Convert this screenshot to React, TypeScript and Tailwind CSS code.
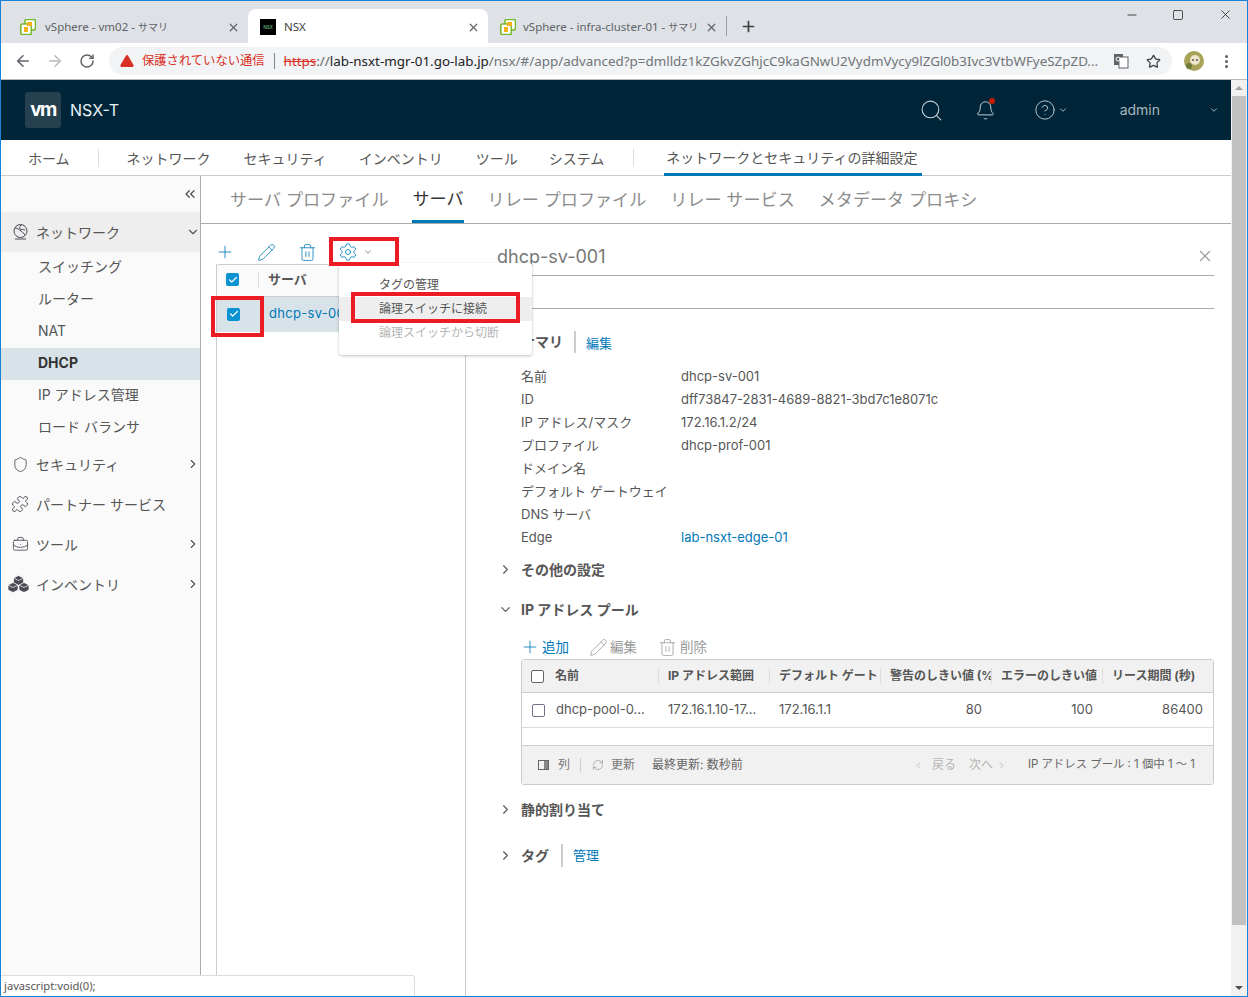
import React from "react";
import {
  ArrowLeft, ArrowRight, RotateCw, Star, MoreVertical, X, Plus, Minus, Square, Search, Bell, CircleHelp,
  ChevronDown, ChevronRight, ChevronLeft, ChevronsLeft, Pencil, Trash2, Settings, Shield, Puzzle, BriefcaseBusiness, Check, RefreshCw, TriangleAlert,
} from "lucide-react";

function VsIcon() {
  return (
    <svg width="16" height="16" viewBox="0 0 16 16" className="shrink-0">
      <rect x="5" y="0.5" width="10.5" height="10.5" rx="1.5" fill="#fff" stroke="#76b82a" strokeWidth="1.6" />
      <rect x="0.8" y="5" width="10.5" height="10.5" rx="1.5" fill="#fff" stroke="#76b82a" strokeWidth="1.6" />
      <rect x="7" y="3" width="5" height="4" fill="#f5b21a" />
      <rect x="4" y="8" width="4" height="5" fill="#f5b21a" />
    </svg>
  );
}

function BrowserTab({ title, suffix, icon, active, width, gap }: { title: string; suffix?: string; icon: React.ReactNode; active?: boolean; width: string; gap: string }) {
  return (
    <div className={`${width} h-[34px] flex items-center pl-3 pr-2 pt-[2px] rounded-t-lg ${active ? "bg-white text-[#3c4043]" : "text-[#5f6368]"}`}>
      {icon}
      <span className={`${gap} flex-1 whitespace-nowrap text-[11.5px]`}>
        {title}
        {suffix && <span className="text-[10px]">{suffix}</span>}
      </span>
      <X size={13} strokeWidth={2.2} className="text-[#5f6368] shrink-0" />
    </div>
  );
}

function Chrome() {
  return (
    <div className="h-[79px] shrink-0 font-[family-name:'Noto_Sans','Noto_Sans_CJK_JP',sans-serif] border-b border-[#b8babd]">
      <div className="h-[42px] bg-[#dee1e6] relative flex items-end pl-[7px]">
        <BrowserTab title="vSphere - vm02 - " suffix="サマリ" icon={<VsIcon />} width="w-[240px]" gap="ml-[9px]" />
        <BrowserTab
          title="NSX"
          width="w-[240px]"
          gap="ml-[8px]"
          active
          icon={<span className="w-4 h-4 bg-black text-[5px] leading-4 text-center text-[#7fd19a] shrink-0">NSX</span>}
        />
        <BrowserTab title="vSphere - infra-cluster-01 - " suffix="サマリ" icon={<VsIcon />} width="w-[238px]" gap="ml-[7px]" />
        <div className="w-px h-5 bg-[#9aa0a6] mb-[7px]" />
        <Plus size={17} strokeWidth={2.4} className="ml-[13px] mb-[8px] text-[#3c4043]" />
        <div className="absolute right-[14px] top-[6px] flex items-center text-[#111]">
          <Minus size={14} strokeWidth={1.3} />
          <Square size={12} strokeWidth={1.4} className="ml-[33px]" />
          <X size={15} strokeWidth={1.2} className="ml-[34px]" />
        </div>
      </div>
      <div className="h-[36px] bg-white flex items-center pl-[13px]">
        <ArrowLeft size={18} strokeWidth={2} className="text-[#5f6368] shrink-0" />
        <ArrowRight size={18} strokeWidth={2} className="ml-[14px] text-[#b6b9bc] shrink-0" />
        <RotateCw size={16} strokeWidth={2.2} className="ml-[15px] text-[#5f6368] shrink-0" />
        <div className="ml-[14px] h-[28px] w-[1063px] shrink-0 rounded-full bg-[#f1f3f4] flex items-center pl-[10px] pr-[11px] text-[13.4px] whitespace-nowrap">
          <TriangleAlert size={16} strokeWidth={0} fill="#d93025" className="shrink-0" />
          <span className="ml-[7px] text-[12.3px] text-[#d93025]">保護されていない通信</span>
          <span className="mx-[9px] w-px h-[16px] bg-[#80868b]" />
          <span className="text-[#d93025] line-through">https</span>
          <span className="text-[#5f6368]">://</span>
          <span className="text-[#202124]">lab-nsxt-mgr-01.go-lab.jp</span>
          <span className="text-[#70757a] flex-1 min-w-0">/nsx/#/app/advanced?p=dmlldz1kZGkvZGhjcC9kaGNwU2VydmVycy9lZGl0b3Ivc3VtbWFyeSZpZD...</span>
          <svg width="16" height="16" viewBox="0 0 16 16" className="ml-[10px] shrink-0">
            <rect x="1" y="1" width="9" height="11" fill="#5f6368" />
            <rect x="6" y="4" width="9" height="11" fill="#fff" stroke="#5f6368" />
            <circle cx="5" cy="6" r="2" fill="none" stroke="#fff" />
          </svg>
          <Star size={15} strokeWidth={2} className="ml-[17px] text-[#3c4043] shrink-0" />
        </div>
        <svg width="20" height="20" viewBox="0 0 20 20" className="ml-[12px] shrink-0">
          <circle cx="10" cy="10" r="10" fill="#a9a35a" />
          <circle cx="11" cy="9" r="5" fill="#ece6cc" />
          <circle cx="9" cy="9" r="1" fill="#555" />
          <circle cx="13" cy="9" r="1" fill="#555" />
          <circle cx="5" cy="15" r="3" fill="#6d7a3a" />
        </svg>
        <MoreVertical size={17} strokeWidth={2.4} className="ml-[14px] text-[#5f6368] shrink-0" />
      </div>
    </div>
  );
}

function AppHeader() {
  return (
    <div className="h-[60px] shrink-0 bg-[#002538] flex items-center pl-[24px] text-[#fafafa]">
      <div className="w-[36px] h-[36px] rounded-[3px] bg-[#25404f] flex items-center justify-center text-[19px] font-bold tracking-[-1.5px] text-white">vm</div>
      <span className="ml-[9px] text-[16px] text-[#e8f3f8]">NSX-T</span>
      <div className="flex-1" />
      <Search size={25} strokeWidth={1} className="text-[#c8d3d8]" />
      <div className="ml-[31px] relative">
        <Bell size={21} strokeWidth={1.1} className="text-[#c8d3d8]" />
        <span className="absolute right-[1px] top-[-2px] w-[6px] h-[6px] rounded-full bg-[#c21d00]" />
      </div>
      <CircleHelp size={22} strokeWidth={1} className="ml-[38px] text-[#c8d3d8]" />
      <ChevronDown size={10} className="ml-[2px] text-[#c8d3d8]" />
      <span className="ml-[52px] mb-[1px] text-[14px] text-[#a9b7bf]">admin</span>
      <ChevronDown size={10} className="ml-[49px] mr-[12px] text-[#c8d3d8]" />
    </div>
  );
}

function NavBar() {
  const items: [string, string][] = [
    ["セキュリティ", "ml-[33px]"],
    ["インベントリ", "ml-[32px]"],
    ["ツール", "ml-[33px]"],
    ["システム", "ml-[31px]"],
  ];
  return (
    <div className="h-[36px] shrink-0 bg-white border-b border-[#ccc] flex items-stretch pl-[27px] text-[14px] text-[#565656]">
      <span className="self-center mt-[1px]">ホーム</span>
      <span className="self-center w-px h-[18px] bg-[#ddd] ml-[28px]" />
      <span className="self-center mt-[1px] ml-[28px]">ネットワーク</span>
      {items.map(([t, m]) => (
        <span key={t} className={`self-center mt-[1px] ${m}`}>{t}</span>
      ))}
      <span className="self-center w-px h-[18px] bg-[#ddd] ml-[29px]" />
      <span className="ml-[30px] pl-[2px] pr-[4px] flex items-center border-b-[3px] border-[#0079b8] pt-[2px] h-[36px]">ネットワークとセキュリティの詳細設定</span>
    </div>
  );
}

function Sub({ t, active }: { t: string; active?: boolean }) {
  return (
    <div className={`h-[32px] pl-[37px] pb-[4px] flex items-center text-[14px] ${active ? "bg-[#d8e3e9] font-bold text-[#333]" : "text-[#565656]"}`}>{t}</div>
  );
}

function Group({ icon, t, open }: { icon: React.ReactNode; t: string; open?: boolean | null }) {
  return (
    <div className={`h-[40px] flex items-center pl-[10px] text-[14px] text-[#565656] ${open ? "bg-[#eee]" : ""}`}>
      <span className="w-[18px] flex justify-center text-[#4a4a55]">{icon}</span>
      <span className="ml-[7px] flex-1">{t}</span>
      {open === true && <ChevronDown size={14} />}
      {open === false && <ChevronRight size={14} />}
    </div>
  );
}

function Cubes() {
  return (
    <svg width="23" height="18" viewBox="0 0 23 18" className="ml-[-3px] shrink-0" stroke="#fff" strokeWidth="0.7" fill="#4a4a55">
      <path d="M11.5 0.5l5 2.5v5l-5 2.5-5-2.5v-5z" />
      <path d="M6 7.5l5 2.5v5l-5 2.5-5-2.5v-5z" />
      <path d="M17 7.5l5 2.5v5l-5 2.5-5-2.5v-5z" />
      <path d="M6.5 3l5 2.5 5-2.5M1 10l5 2.5 5-2.5M12 10l5 2.5 5-2.5" fill="none" />
    </svg>
  );
}

function Sidebar() {
  return (
    <div className="w-[200px] shrink-0 bg-[#fafafa] border-r border-[#aaa] flex flex-col">
      <div className="h-[36px] flex items-center justify-end pr-[2px] text-[#565656]"><ChevronsLeft size={16} /></div>
      <Group
        open
        t="ネットワーク"
        icon={
          <svg width="17" height="18" viewBox="0 0 17 18" fill="none" stroke="currentColor" strokeWidth="1">
            <circle cx="8.5" cy="8" r="6.5" />
            <path d="M3 5c3 0 4 2 6 3s3 3 4 4M9 2c-1 2-2 3-1 4s3 0 5 1M3 16h11" />
          </svg>
        }
      />
      <Sub t="スイッチング" />
      <Sub t="ルーター" />
      <Sub t="NAT" />
      <Sub t="DHCP" active />
      <Sub t="IP アドレス管理" />
      <Sub t="ロード バランサ" />
      <Group open={false} t="セキュリティ" icon={<Shield size={17} strokeWidth={1.2} />} />
      <Group open={null} t="パートナー サービス" icon={<Puzzle size={18} strokeWidth={1.2} />} />
      <Group open={false} t="ツール" icon={<BriefcaseBusiness size={17} strokeWidth={1.2} />} />
      <Group open={false} t="インベントリ" icon={<Cubes />} />
    </div>
  );
}

function SubTabs() {
  const c = "text-[17.1px] text-[#8c8c8c] mr-[24px] pt-[1px]";
  return (
    <div className="h-[48px] shrink-0 border-b border-[#aaa] flex items-stretch pl-[29px]">
      <span className={`${c} self-center`}>サーバ プロファイル</span>
      <span className="text-[17.1px] text-[#333] mr-[24px] flex items-center border-b-[3px] border-[#0079b8] pt-[2px]">サーバ</span>
      <span className={`${c} self-center`}>リレー プロファイル</span>
      <span className={`${c} self-center`}>リレー サービス</span>
      <span className={`${c} self-center`}>メタデータ プロキシ</span>
    </div>
  );
}

function Box({ on, big }: { on?: boolean; big?: boolean }) {
  return on ? (
    <span className="w-[13px] h-[13px] rounded-[2px] bg-[#0a93d2] flex items-center justify-center shrink-0">
      <Check size={10} strokeWidth={3} className="text-white" />
    </span>
  ) : (
    <span className={`${big ? "border-[#666]" : "border-[#776e8a]"} w-[13px] h-[13px] rounded-[2px] border-[1.5px] bg-white shrink-0`} />
  );
}

function ListPane() {
  return (
    <div className="w-[265px] shrink-0 flex flex-col pl-[15px] relative">
      <div className="h-[40px] flex items-end pb-[2px] ml-[-1px] text-[#0079b8]">
        <Plus size={20} strokeWidth={1} />
        <Pencil size={19} strokeWidth={1} className="ml-[22px]" />
        <Trash2 size={19} strokeWidth={1} className="ml-[22px]" />
        <Settings size={20} strokeWidth={1} className="ml-[21px]" />
        <ChevronDown size={10} className="ml-[5px] mb-[5px] text-[#777]" />
      </div>
      <div className="flex-1 border-l border-r border-[#ccc] flex flex-col">
        <div className="h-[33px] border-t border-b border-[#ccc] bg-[#fafafa] flex items-center pl-[9px] pb-[2px] text-[13px] font-bold text-[#565656] rounded-t-[3px]">
          <Box on />
          <span className="ml-[19px] w-px h-[16px] bg-[#ddd]" />
          <span className="ml-[9px]">サーバ</span>
        </div>
        <div className="h-[35px] bg-[#d8e3e9] flex items-center pl-[10px] pb-[1px] text-[13px] text-[#0079b8]">
          <Box on />
          <span className="ml-[29px] tracking-[0.3px] whitespace-nowrap">dhcp-sv-001</span>
        </div>
      </div>
      <div className="absolute left-[138px] top-[39px] w-[193px] h-[92px] bg-white rounded-[3px] shadow-[0_1px_3px_rgba(0,0,0,0.25)] pt-[10px] text-[12px] z-10">
        <div className="h-[24px] pl-[40px] flex items-center text-[#565656]">タグの管理</div>
        <div className="h-[24px] pl-[40px] flex items-center text-[#565656] bg-[#eee]">論理スイッチに接続</div>
        <div className="h-[24px] pl-[40px] flex items-center text-[#b5b5b5]">論理スイッチから切断</div>
      </div>
      <div className="absolute left-[128px] top-[13px] w-[70px] h-[29px] border-[4px] border-[#ed1c24] z-20" />
      <div className="absolute left-[10px] top-[72px] w-[53px] h-[41px] border-[4px] border-[#ed1c24] z-20" />
      <div className="absolute left-[150px] top-[68px] w-[169px] h-[31px] border-[4px] border-[#ed1c24] z-20" />
    </div>
  );
}

const rows: [string, string, boolean?][] = [
  ["名前", "dhcp-sv-001"],
  ["ID", "dff73847-2831-4689-8821-3bd7c1e8071c"],
  ["IP アドレス/マスク", "172.16.1.2/24"],
  ["プロファイル", "dhcp-prof-001"],
  ["ドメイン名", ""],
  ["デフォルト ゲートウェイ", ""],
  ["DNS サーバ", ""],
  ["Edge", "lab-nsxt-edge-01", true],
];

function Section({ t, open, className, children }: { t: string; open?: boolean; className: string; children?: React.ReactNode }) {
  return (
    <div className={`flex items-center h-[24px] text-[14px] font-bold text-[#565656] ${className}`}>
      {open ? <ChevronDown size={15} strokeWidth={1.8} className="ml-[1px]" /> : <ChevronRight size={15} strokeWidth={1.8} className="ml-[1px]" />}
      <span className="ml-[8px]">{t}</span>
      {children}
    </div>
  );
}

function PoolTable() {
  const hdr = ["IP アドレス範囲", "デフォルト ゲート", "警告のしきい値 (%", "エラーのしきい値", "リース期間 (秒)"];
  return (
    <div className="ml-[24px] w-[693px] h-[126px] border border-[#ccc] rounded-[3px] flex flex-col">
      <div className="h-[33px] shrink-0 bg-[#f1f1f1] border-b border-[#ccc] grid grid-cols-[136px_111px_111px_111px_111px_1fr] items-center text-[12px] font-bold text-[#565656]">
        <div className="flex items-center pl-[9px]">
          <Box big />
          <span className="ml-[11px]">名前</span>
        </div>
        {hdr.map((h) => (
          <div key={h} className="h-[16px] border-l border-[#ddd] pl-[9px] flex items-center whitespace-nowrap overflow-hidden">{h}</div>
        ))}
      </div>
      <div className="h-[35px] shrink-0 border-b border-[#ddd] grid grid-cols-[136px_111px_111px_111px_111px_1fr] items-center text-[13px] text-[#565656]">
        <div className="flex items-center pl-[10px]">
          <Box />
          <span className="ml-[11px]">dhcp-pool-0...</span>
        </div>
        <div className="pl-[10px]">172.16.1.10-17...</div>
        <div className="pl-[10px]">172.16.1.1</div>
        <div className="text-right pr-[9px]">80</div>
        <div className="text-right pr-[9px]">100</div>
        <div className="text-right pr-[10px]">86400</div>
      </div>
      <div className="h-[18px] shrink-0 border-b border-[#ccc]" />
      <div className="flex-1 bg-[#f1f1f1] flex items-center pl-[16px] pr-[18px] text-[12px] text-[#777] whitespace-nowrap">
        <svg width="11" height="10" viewBox="0 0 11 10" className="shrink-0"><rect x="0.5" y="0.5" width="10" height="9" fill="none" stroke="#666" /><rect x="6" y="1" width="4" height="8" fill="#888" /></svg>
        <span className="ml-[9px]">列</span>
        <span className="ml-[10px] w-px h-[14px] bg-[#ccc]" />
        <RefreshCw size={12} strokeWidth={1} className="ml-[11px]" />
        <span className="ml-[7px]">更新</span>
        <span className="ml-[17px] text-[#666]">最終更新: 数秒前</span>
        <div className="flex-1" />
        <ChevronLeft size={11} className="text-[#bbb]" />
        <span className="ml-[8px] text-[#b5b5b5]">戻る</span>
        <span className="ml-[13px] text-[#b5b5b5]">次へ</span>
        <ChevronRight size={11} className="ml-[3px] text-[#bbb]" />
        <span className="ml-[21px] text-[11.4px] text-[#666]">IP アドレス プール : 1 個中 1 ～ 1</span>
      </div>
    </div>
  );
}

function Detail() {
  return (
    <div className="flex-1 min-w-0 pl-[30px] pr-[17px]">
      <div className="h-[52px] border-b border-[#aaa] flex items-end pb-[5px] justify-between">
        <span className="text-[18px] text-[#777]">dhcp-sv-001</span>
        <X size={18} strokeWidth={1.6} className="text-[#999] mb-[5px]" />
      </div>
      <div className="h-[33px] border-b border-[#aaa]" />
      <div className="mt-[21px] ml-[24px] h-[24px] flex items-center">
        <span className="text-[14px] font-bold text-[#565656] pb-[2px]">サマリ</span>
        <span className="ml-[11px] w-[2px] h-[22px] bg-[#ccc]" />
        <span className="ml-[10px] pt-[4px] text-[13px] text-[#0079b8]">編集</span>
      </div>
      <div className="mt-[11px] ml-[24px] flex flex-col text-[13px] text-[#565656]">
        {rows.map(([k, v, link]) => (
          <div key={k} className="h-[23px] flex items-center">
            <span className="w-[160px]">{k}</span>
            <span className={link ? "text-[#0079b8]" : ""}>{v}</span>
          </div>
        ))}
      </div>
      <Section t="その他の設定" className="mt-[8px]" />
      <Section t="IP アドレス プール" open className="mt-[16px]" />
      <div className="mt-[14px] ml-[23px] h-[24px] flex items-center text-[13.5px] whitespace-nowrap">
        <Plus size={20} strokeWidth={1} className="text-[#0079b8]" />
        <span className="ml-[2px] text-[#0079b8]">追加</span>
        <Pencil size={19} strokeWidth={1} className="ml-[20px] text-[#999]" />
        <span className="ml-[2px] text-[#999]">編集</span>
        <Trash2 size={19} strokeWidth={1} className="ml-[21px] text-[#999]" />
        <span className="ml-[3px] text-[#999]">削除</span>
      </div>
      <PoolTable />
      <Section t="静的割り当て" className="mt-[12px]" />
      <Section t="タグ" className="mt-[22px]">
        <span className="ml-[12px] w-[2px] h-[23px] bg-[#ccc]" />
        <span className="ml-[10px] pt-[2px] text-[13px] font-normal text-[#0079b8]">管理</span>
      </Section>
    </div>
  );
}

function Scrollbar() {
  return (
    <div className="w-[16px] shrink-0 bg-[#f1f1f1] flex flex-col items-center">
      <div className="h-[16px] flex items-center justify-center"><span className="w-0 h-0 border-x-[4px] border-x-transparent border-b-[4px] border-b-[#a3a3a3]" /></div>
      <div className="w-[14px] h-[829px] bg-[#c1c1c1]" />
      <div className="flex-1" />
      <div className="h-[16px] flex items-center justify-center"><span className="w-0 h-0 border-x-[4px] border-x-transparent border-t-[4px] border-t-[#505050]" /></div>
    </div>
  );
}

export default function App() {
  return (
    <div className="w-[1248px] h-[997px] relative overflow-hidden bg-white border border-[#1883d7] flex flex-col font-[family-name:Inter,'Noto_Sans_CJK_JP',sans-serif]">
      <Chrome />
      <div className="flex-1 min-h-0 flex">
        <div className="flex-1 min-w-0 flex flex-col">
          <AppHeader />
          <NavBar />
          <div className="flex-1 min-h-0 flex">
            <Sidebar />
            <div className="flex-1 min-w-0 flex flex-col">
              <SubTabs />
              <div className="flex-1 min-h-0 flex">
                <ListPane />
                <div className="w-px" />
                <Detail />
              </div>
            </div>
          </div>
        </div>
        <Scrollbar />
      </div>
      <div className="absolute left-0 bottom-0 w-[414px] h-[21px] bg-white border-t border-r border-[#ddd] rounded-tr-[3px] pl-[3px] flex items-center text-[11.2px] text-[#565656] z-30 font-[family-name:'Noto_Sans',sans-serif]">javascript:void(0);</div>
    </div>
  );
}
